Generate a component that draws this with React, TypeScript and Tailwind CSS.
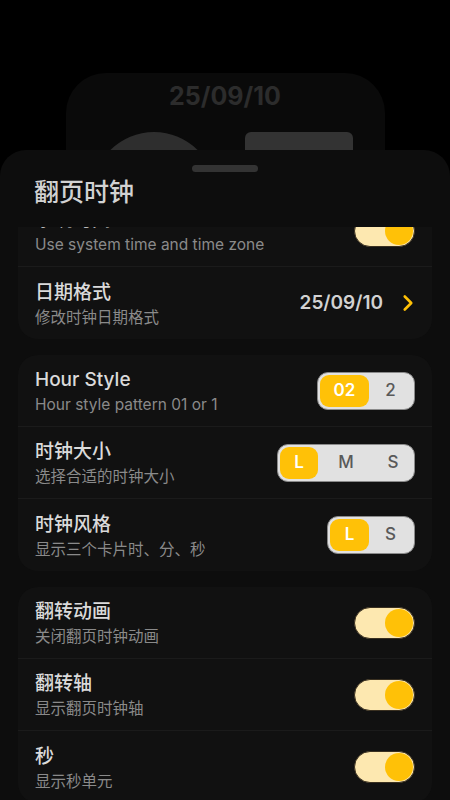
import React from 'react';
import { ChevronRight } from 'lucide-react';

const FONT = "font-['Inter','Noto_Sans_CJK_SC',sans-serif]";

type Seg = { label: string; w: number };

function Toggle(): React.JSX.Element {
  return (
    <div className="w-[61px] h-[32px] rounded-full bg-[#fde8b0] border border-[#3a3020] flex items-center justify-end pr-[1px]">
      <div className="w-[28px] h-[28px] rounded-full bg-[#ffc107]" />
    </div>
  );
}

function Segmented({ items }: { items: Seg[] }): React.JSX.Element {
  return (
    <div className="flex items-center h-[38px] p-[2px] rounded-[11px] bg-[#e1e1e1] border border-[#8a8a8a]">
      {items.map((s, i) => (
        <div
          key={s.label}
          style={{ width: s.w }}
          className={
            i === 0
              ? 'h-full rounded-[9px] bg-[#ffc107] text-white font-semibold text-[17px] flex items-center justify-center'
              : 'h-full text-[#595959] font-medium text-[17px] flex items-center justify-center'
          }
        >
          {s.label}
        </div>
      ))}
    </div>
  );
}

function Row({
  title,
  sub,
  right,
  last,
}: {
  title: string;
  sub: string;
  right: React.ReactNode;
  last?: boolean;
}): React.JSX.Element {
  return (
    <div
      className={
        'h-[72px] flex items-center justify-between pl-[17px] pr-[17px] ' +
        (last ? '' : 'border-b border-[#1b1b1b]')
      }
    >
      <div className="flex flex-col pt-[3px]">
        <span className="text-[19px] leading-[24px] font-medium text-[#dadada]">{title}</span>
        <span className="mt-[2px] text-[15.5px] leading-[22px] text-[#8a8a8a]">{sub}</span>
      </div>
      {right}
    </div>
  );
}

export default function App(): React.JSX.Element {
  return (
    <div className={`${FONT} relative w-[450px] h-[800px] bg-black overflow-hidden`}>
      {/* clock preview behind the sheet */}
      <div className="mx-auto mt-[73px] w-[319px] h-[200px] rounded-[40px] bg-[#0a0a0a] flex flex-col items-center pt-[10px]">
        <span className="text-[25px] font-bold text-[#2c2c2c] leading-[26px]">25/09/10</span>
        <div className="w-full flex items-start justify-between mt-[23px] pl-[26px] pr-[32px]">
          <div className="w-[124px] h-[124px] rounded-full bg-[#2e2e2e]" />
          <div className="w-[108px] h-[90px] rounded-[6px] bg-[#333333]" />
        </div>
      </div>

      {/* bottom sheet */}
      <div className="absolute left-0 right-0 top-[150px] bottom-0 rounded-t-[26px] bg-[#0d0d0d] flex flex-col">
        <div className="flex justify-center pt-[15px]">
          <div className="w-[66px] h-[7px] rounded-full bg-[#333333]" />
        </div>
        <h1 className="pl-[34px] text-[25px] leading-[40px] font-medium text-[#d2d2d2]">
          翻页时钟
        </h1>
        <div className="mt-[15px] flex-1 overflow-hidden">
          <div className="-mt-[32px] flex flex-col gap-[16px] mx-[18px]">
            <div className="rounded-[20px] bg-[#111111]">
              <Row title="系统时间" sub="Use system time and time zone" right={<Toggle />} />
              <Row
                title="日期格式"
                sub="修改时钟日期格式"
                last
                right={
                  <div className="flex items-center gap-[12px]">
                    <span className="text-[19px] font-semibold text-[#d2d2d2]">25/09/10</span>
                    <ChevronRight className="w-[26px] h-[26px] text-[#ffc107] -mr-[6px]" strokeWidth={2.4} />
                  </div>
                }
              />
            </div>

            <div className="rounded-[20px] bg-[#111111]">
              <Row
                title="Hour Style"
                sub="Hour style pattern 01 or 1"
                right={<Segmented items={[{ label: '02', w: 49 }, { label: '2', w: 43 }]} />}
              />
              <Row
                title="时钟大小"
                sub="选择合适的时钟大小"
                right={
                  <Segmented
                    items={[
                      { label: 'L', w: 38 },
                      { label: 'M', w: 56 },
                      { label: 'S', w: 38 },
                    ]}
                  />
                }
              />
              <Row
                title="时钟风格"
                sub="显示三个卡片时、分、秒"
                last
                right={<Segmented items={[{ label: 'L', w: 39 }, { label: 'S', w: 43 }]} />}
              />
            </div>

            <div className="rounded-[20px] bg-[#111111]">
              <Row title="翻转动画" sub="关闭翻页时钟动画" right={<Toggle />} />
              <Row title="翻转轴" sub="显示翻页时钟轴" right={<Toggle />} />
              <Row title="秒" sub="显示秒单元" last right={<Toggle />} />
            </div>
          </div>
        </div>
      </div>
    </div>
  );
}
